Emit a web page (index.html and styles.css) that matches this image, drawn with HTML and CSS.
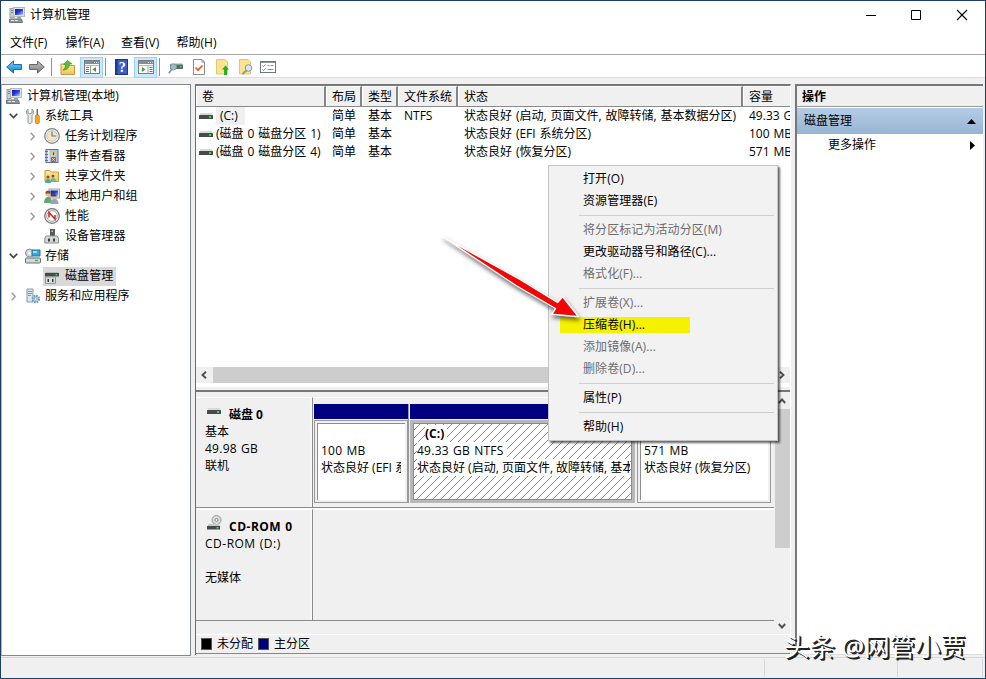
FILE: index.html
```html
<!DOCTYPE html>
<html lang="zh-CN">
<head>
<meta charset="utf-8">
<title>计算机管理</title>
<link rel="stylesheet" href="styles.css">
</head>
<body>
<svg width="0" height="0" class="defs">
  <defs>
    <linearGradient id="screen" x1="0" y1="0" x2="1" y2="1"><stop offset="0" stop-color="#0616a8"/><stop offset=".5" stop-color="#2b3fd8"/><stop offset="1" stop-color="#bcd0ff"/></linearGradient>
    <linearGradient id="blueArrow" x1="0" y1="0" x2="0" y2="1"><stop offset="0" stop-color="#7fd4fb"/><stop offset="1" stop-color="#0b7fd0"/></linearGradient>
    <linearGradient id="grayArrow" x1="0" y1="0" x2="0" y2="1"><stop offset="0" stop-color="#c4c4c4"/><stop offset="1" stop-color="#7d7d7d"/></linearGradient>
    <linearGradient id="folder" x1="0" y1="0" x2="0" y2="1"><stop offset="0" stop-color="#ffeaa0"/><stop offset="1" stop-color="#eec45c"/></linearGradient>
    <symbol id="pc" viewBox="0 0 16 16">
      <rect x="1" y="1.500" width="4" height="9" fill="#c9ced0" stroke="#9aa0a2"/><path d="M2 3.500h2M2 5.500h2" stroke="#7b8385"/>
      <rect x="4.500" y=".5" width="11" height="9" fill="#dfe3e0" stroke="#b4bab5"/><rect x="6" y="2" width="8" height="6" fill="url(#screen)"/>
      <path d="M8 10h4v1.500H8z" fill="#9a9f98"/><path d="M.5 12h12l1 3.500H.5z" fill="#8d9598" stroke="#70777a"/><path d="M2 13.500h3M6 13.500h3" stroke="#e4e8e8"/>
    </symbol>
    <symbol id="drive" viewBox="0 0 14 7">
      <path d="M1.500 0h11L14 3H0z" fill="#d9dbdb"/><rect y="2" width="14" height="4" rx=".6" fill="#454b4b"/><rect x="10" y="3" width="2" height="2" fill="#39e04c"/>
    </symbol>
    <symbol id="open" viewBox="0 0 5 9"><path d="M.7.700 4.200 4.500.7 8.300" fill="none" stroke="#a0a0a0" stroke-width="1.500"/></symbol>
    <symbol id="shut" viewBox="0 0 9 6"><path d="M.7.700 4.500 4.600 8.300.7" fill="none" stroke="#404040" stroke-width="1.600"/></symbol>
    <symbol id="win" viewBox="0 0 16 14">
      <rect x=".5" y=".5" width="15" height="13" fill="#fff" stroke="#777f86"/><path d="M1 1h14v3H1z" fill="#868e94"/><path d="M10 2.500h1M12 2.500h1M14 2.500h.5" stroke="#fff"/><path d="M1 5.500h14" stroke="#b4babe"/>
    </symbol>
  </defs>
</svg>

<div class="window">
  <header class="titlebar">
    <svg class="i16"><use href="#pc"/></svg>
    <span class="title">计算机管理</span>
    <svg class="controls" viewBox="0 0 104 12"><path d="M0 6.500h10" stroke="#000"/><path d="M45.500 1.500h9v9h-9z" fill="none" stroke="#000"/><path d="m91 1 10 10m0-10L91 11" stroke="#000" stroke-width="1.100"/></svg>
  </header>

  <nav class="menubar"><span>文件(F)</span><span>操作(A)</span><span>查看(V)</span><span>帮助(H)</span></nav>

  <div class="toolbar">
    <svg class="t-back" viewBox="0 0 16 14"><path d="M.7 7 7.500 1v3.500h8v5h-8V13z" fill="url(#blueArrow)" stroke="#1c6ca8"/></svg>
    <svg class="t-fwd" viewBox="0 0 16 14"><path d="M15.300 7 8.500 1v3.500h-8v5h8V13z" fill="url(#grayArrow)" stroke="#666"/></svg>
    <i class="divider d1"></i>
    <svg class="t-up" viewBox="0 0 15 15"><path d="M1 4h5l1 1.500h7.500v9H1z" fill="url(#folder)" stroke="#c49a3c"/><path d="M3 10C5 9 5.500 7 5.500 4.500H3.500L7.500.5l4.500 3.500H9.500c-.5 4-2.500 6-6.500 6z" fill="#5bbf34" stroke="#358c1c" stroke-width=".6"/></svg>
    <span class="pressed p1"><svg viewBox="0 0 16 14"><use href="#win"/><path d="M2 7.500h3m-3 2h3m-3 2h3" stroke="#3b7cc0"/><path d="M6.500 6v7" stroke="#9ba2a7"/><path d="M12 7v5L8.500 9.500z" fill="#3ba52b"/></svg></span>
    <i class="divider d2"></i>
    <svg class="t-help" viewBox="0 0 13 16"><rect x=".5" y=".5" width="12" height="15" fill="#3a5fc4" stroke="#20377c"/><path d="M1.500 1v14" stroke="#1f3a90" stroke-width="2"/><text x="7.300" y="13" text-anchor="middle" class="q">?</text></svg>
    <span class="pressed p2"><svg viewBox="0 0 16 14"><use href="#win"/><path d="M11.500 7.500h3m-3 2h3m-3 2h3" stroke="#3b7cc0"/><path d="M10 6v7" stroke="#9ba2a7"/><path d="M4 7v5l3.500-2.500z" fill="#3ba52b"/></svg></span>
    <i class="divider d3"></i>
    <svg class="t-find" viewBox="0 0 15 13"><path d="M3 2h11l1 2H2z" fill="#cfd4d4"/><rect x="2" y="3.500" width="13" height="4.500" fill="#5b6669"/><path d="M12 5h1.500v1.500H12z" fill="#4ee260"/><path d="M4 8 .8 12.300" stroke="#7c9db0" stroke-width="1.800"/><circle cx="5.500" cy="6" r="3" fill="#bfe0ee" fill-opacity=".7" stroke="#7b99a6"/></svg>
    <svg class="t-check" viewBox="0 0 12 16"><path d="M.5.500H9L11.500 3v12.500H.5z" fill="#fff" stroke="#8d8d8d"/><path d="M9 .5V3h2.500" fill="none" stroke="#8d8d8d"/><path d="m2.500 8.500 2.500 2.700 4.500-4.700" fill="none" stroke="#ef5a22" stroke-width="1.700"/></svg>
    <svg class="t-export" viewBox="0 0 13 16"><path d="M.5.500H9L11.500 3v12H.5z" fill="#fbe38f" stroke="#e3c774"/><path d="m9.500 6.500 3.500 4h-2V16H8v-5.500H6z" fill="#28b01e"/></svg>
    <svg class="t-search" viewBox="0 0 14 16"><path d="M.5.500H9L11.500 3v12H.5z" fill="#fbe38f" stroke="#e3c774"/><path d="m7.500 11.500-4 3.500" stroke="#8797a0" stroke-width="1.800"/><circle cx="9.500" cy="9" r="3.300" fill="#d5eaf5" stroke="#8797a0"/></svg>
    <svg class="t-list" viewBox="0 0 16 12"><rect x=".5" y=".5" width="15" height="11" fill="#fff" stroke="#6d767b"/><path d="M1 1.500h14" stroke="#8b9498"/><path d="m2.500 4.500 1 1 2-2M2.500 8.500l1 1 2-2" fill="none" stroke="#4596d8"/><path d="M7.500 4.500h2m1 0h3m-6 4h6" stroke="#88939a"/></svg>
  </div>

  <main class="workspace">
    <aside class="tree">
      <div class="node root"><svg class="i16"><use href="#pc"/></svg><span>计算机管理(本地)</span></div>
      <div class="node l1"><svg class="shut"><use href="#shut"/></svg>
        <svg class="i16" viewBox="0 0 16 16"><path d="M3 1v4l2 1 2-1V1c2 1 2 5 0 6.500V14c0 2-4 2-4 0V7.500C1 6 1 2 3 1z" fill="#e8eaea" stroke="#828a8c" stroke-width=".9"/><path d="M11.500 1h1.500v6h-1.500z" fill="#687078"/><rect x="10.300" y="7" width="4" height="8.500" rx="1.300" fill="#f6a91d" stroke="#b97611" stroke-width=".7"/></svg><span>系统工具</span></div>
      <div class="node l2"><svg class="open"><use href="#open"/></svg>
        <svg class="i16" viewBox="0 0 16 16"><circle cx="8" cy="8" r="7.300" fill="#f1f3f4" stroke="#7d8488" stroke-width="1.200"/><circle cx="8" cy="8" r="5.300" fill="#f9e5b9" stroke="#c6cacb"/><path d="M8 3.500V8h4" fill="none" stroke="#4f7da9" stroke-width="1.200"/></svg><span>任务计划程序</span></div>
      <div class="node l2"><svg class="open"><use href="#open"/></svg>
        <svg class="i16" viewBox="0 0 16 16"><rect x="2" y="1.500" width="12" height="13" fill="#b4c5e2" stroke="#5d7296"/><path d="M4.500 2v12" stroke="#e9eff8" stroke-width="2"/><path d="M1 3.500h3m-3 3h3m-3 3h3m-3 3h3" stroke="#5b6f90"/><path d="m9.500 3 3.500 5H6z" fill="#fbd32f"/><path d="M9.600 4.500v2.500" stroke="#222"/><rect x="7" y="9" width="5" height="5" rx="1" fill="#e0413d"/><path d="m8.300 10.300 2.400 2.400m0-2.400-2.400 2.400" stroke="#fff" stroke-width=".8"/></svg><span>事件查看器</span></div>
      <div class="node l2"><svg class="open"><use href="#open"/></svg>
        <svg class="i16" viewBox="0 0 16 16"><path d="M1 2.500h5l1 1.500h7.500v9.500H1z" fill="url(#folder)" stroke="#c99a3e"/><circle cx="4" cy="9" r="1.500" fill="#805333"/><path d="M1 15c0-5.500 6-5.500 6 0z" fill="#49ac8c"/><circle cx="9" cy="8" r="1.500" fill="#805333"/><path d="M6.200 14c0-5.500 5.800-5.500 5.800 0z" fill="#5abe9c"/></svg><span>共享文件夹</span></div>
      <div class="node l2"><svg class="open"><use href="#open"/></svg>
        <svg class="i16" viewBox="0 0 16 16"><rect x="5" y="1" width="10.500" height="9" fill="#dde1e6" stroke="#a0a5aa"/><rect x="6.500" y="2.500" width="7.500" height="6" fill="url(#screen)"/><circle cx="4" cy="6" r="2.500" fill="#e9b986"/><path d="M1.300 5.500c0-4 5.400-4 5.400 0" fill="#835224"/><path d="M0 15c0-8 8-8 8 0z" fill="#62a86a"/><circle cx="10" cy="9" r="2.300" fill="#edc292"/><path d="M7.600 8.500c0-3.500 4.900-3.500 4.900 0" fill="#594133"/><path d="M6.500 16c0-7 8-7 8 0z" fill="#8da7c7"/></svg><span>本地用户和组</span></div>
      <div class="node l2"><svg class="open"><use href="#open"/></svg>
        <svg class="i16" viewBox="0 0 16 16"><circle cx="8" cy="8" r="7.300" fill="#eee" stroke="#777" stroke-width="1.200"/><circle cx="8" cy="8" r="5.300" fill="#fff" stroke="#a3a3a3"/><path d="M5 9.500V4.500l6 6.500V7" fill="none" stroke="#d5221d" stroke-width="1.500"/></svg><span>性能</span></div>
      <div class="node l2 leaf">
        <svg class="i16" viewBox="0 0 16 16"><path d="M6 1h5v7H6z" fill="#565c5e"/><path d="M7.500 2.500h1.500V4H7.500z" fill="#a5e7aa"/><path d="M2 8h11l1.500 2v5H.8v-5z" fill="#d5d8d9" stroke="#8c9193"/><path d="M4 10.500h2v3H4zm5 0h2v3H9z" fill="#3d4345"/></svg><span>设备管理器</span></div>
      <div class="node l1"><svg class="shut"><use href="#shut"/></svg>
        <svg class="i16" viewBox="0 0 16 16"><circle cx="4.500" cy="5" r="4" fill="#d6dadd" stroke="#888f94"/><circle cx="4.500" cy="5" r="1.200" fill="#fff"/><path d="M7 2h8v6H7z" fill="#38a8dc" stroke="#297599"/><path d="M8 3h4v2H8z" fill="#9de0f8"/><path d="M1.500 9h12l2 2H.5z" fill="#e7e9ea"/><rect x=".5" y="10" width="15" height="5" rx="1" fill="#d3d7d9" stroke="#697075"/><path d="M10 12.500h3" stroke="#34cc47" stroke-width="1.500"/></svg><span>存储</span></div>
      <div class="node l2 leaf">
        <span class="selected"><svg class="i16" viewBox="0 0 16 16"><path d="M2 4h12l1 2H1z" fill="#b5b9ba"/><path d="M1 5h14v3.500H1z" fill="#444b4d"/><path d="M11.500 6H13v1.500h-1.500z" fill="#42dd54"/><path d="M1.500 9h10v6.500h-10z" fill="#dadddd" stroke="#919697"/><path d="M3.500 11h1.500v3H3.500zm4.500 0h1.500v3H8z" fill="#33393b"/></svg><span>磁盘管理</span></span></div>
      <div class="node l1"><svg class="open"><use href="#open"/></svg>
        <svg class="i16" viewBox="0 0 16 16"><path d="M2 1h6v13H2z" fill="#dce7ed" stroke="#8799a4"/><path d="M3 3.500h4M3 5.500h4M3 7.500h3" stroke="#769bad"/><circle cx="10.800" cy="11" r="3.200" fill="#c9e0f0" stroke="#6d9cbc" stroke-width="2.200" stroke-dasharray="1.600 .9"/><circle cx="10.800" cy="11" r="1.300" fill="#fff" stroke="#6d9cbc" stroke-width=".7"/></svg><span>服务和应用程序</span></div>
    </aside>

    <section class="center">
      <div class="volumes">
        <div class="grid head"><span>卷</span><span>布局</span><span>类型</span><span>文件系统</span><span>状态</span><span>容量</span></div>
        <div class="grid"><span class="vol"><svg><use href="#drive"/></svg><b class="focus">(C:)</b></span><span>简单</span><span>基本</span><span>NTFS</span><span>状态良好 (启动, 页面文件, 故障转储, 基本数据分区)</span><span>49.33 GB</span></div>
        <div class="grid"><span class="vol"><svg><use href="#drive"/></svg><b>(磁盘 0 磁盘分区 1)</b></span><span>简单</span><span>基本</span><span></span><span>状态良好 (EFI 系统分区)</span><span>100 MB</span></div>
        <div class="grid"><span class="vol"><svg><use href="#drive"/></svg><b>(磁盘 0 磁盘分区 4)</b></span><span>简单</span><span>基本</span><span></span><span>状态良好 (恢复分区)</span><span>571 MB</span></div>
        <div class="hscroll"><svg viewBox="0 0 6 8"><path d="M5 .8 1.500 4 5 7.200" /></svg><i></i><svg viewBox="0 0 6 8"><path d="M1 .8 4.500 4 1 7.200"/></svg></div>
      </div>
      <div class="splitter"></div>
      <div class="disks">
        <div class="disklist">
          <div class="disk">
            <div class="info"><div class="name"><svg class="dk" viewBox="0 0 14 7"><use href="#drive"/></svg><span>磁盘 0</span></div><div>基本</div><div class="wide">49.98 GB</div><div>联机</div></div>
            <div class="parts">
              <div class="part a"><div class="bar"></div><div class="box"><p>&nbsp;</p><p class="wide">100 MB</p><p>状态良好 (EFI 系统分区)</p></div></div>
              <div class="part b"><div class="bar"></div><div class="box"><p class="label"><em>(C:)</em></p><p class="wide"><em>49.33 GB NTFS</em></p><p><em>状态良好 (启动, 页面文件, 故障转储, 基本数据分区)</em></p></div></div>
              <div class="part c"><div class="bar"></div><div class="box"><p>&nbsp;</p><p class="wide">571 MB</p><p>状态良好 (恢复分区)</p></div></div>
            </div>
          </div>
          <div class="disk cd">
            <div class="info"><div class="name"><svg class="cdk" viewBox="0 0 15 15"><circle cx="9.500" cy="5" r="4.500" fill="#ddd" stroke="#999"/><circle cx="9.500" cy="5" r="1.500" fill="#fff" stroke="#888"/><path d="M1.500 9h10L14 12H0z" fill="#c5c8c8"/><path d="M0 11h13v3.500H0z" fill="#454b4b"/><path d="M9.500 12h2v1.500h-2z" fill="#39e04c"/></svg><span class="wider">CD-ROM 0</span></div><div class="wider">CD-ROM (D:)</div><div>&nbsp;</div><div>无媒体</div></div>
            <div class="parts"></div>
          </div>
        </div>
        <div class="vscroll"><svg viewBox="0 0 8 6"><path d="M.8 5 4 1.500 7.200 5"/></svg><i></i><svg viewBox="0 0 8 6"><path d="M.8 1 4 4.500 7.200 1"/></svg></div>
      </div>
      <div class="legend"><i class="k"></i><span>未分配</span><i class="n"></i><span>主分区</span></div>
    </section>

    <aside class="actions">
      <div class="ahead">操作</div>
      <div class="agroup"><span>磁盘管理</span><svg viewBox="0 0 9 5"><path d="M0 5 4.500 0 9 5z"/></svg></div>
      <div class="aitem"><span>更多操作</span><svg viewBox="0 0 5 9"><path d="M0 0 5 4.500 0 9z"/></svg></div>
    </aside>
  </main>
  <footer class="status"><span></span><span></span><span></span></footer>
</div>

<div class="popup">
  <div>打开(O)</div><div>资源管理器(E)</div><hr>
  <div class="off">将分区标记为活动分区(M)</div><div>更改驱动器号和路径(C)...</div><div class="off">格式化(F)...</div><hr>
  <div class="off">扩展卷(X)...</div><div class="marked">压缩卷(H)...</div><div class="off">添加镜像(A)...</div><div class="off">删除卷(D)...</div><hr>
  <div>属性(P)</div><hr>
  <div>帮助(H)</div>
</div>
<svg class="pointer" viewBox="0 0 150 100"><path d="M4.700 4.700 82 47.500 119.500 70.500 124.700 64.700 140.500 84.700 113.700 82.300 117.500 76.500 78 53.500z" fill="#f20505" stroke="#fff" stroke-width="1.400" stroke-linejoin="round"/></svg>
<div class="credit">头条 @网管小贾</div>
</body>
</html>
```
FILE: styles.css
```css
* { box-sizing: border-box; }
body { margin: 0; width: 986px; height: 679px; overflow: hidden; font: 12px/18px "Open Sans", "Noto Sans CJK SC", sans-serif; color: #000; }
svg { display: block; flex: none; }
.defs { position: absolute; }
.i16 { width: 16px; height: 16px; }
.window { width: 986px; height: 679px; border: 1px solid #1d3f66; background: #f0f0f0; display: flex; flex-direction: column; }

.titlebar { height: 29px; background: #fff; display: flex; align-items: center; padding: 0 15px 1px 8px; }
.title { margin-left: 5px; }
.controls { width: 104px; height: 12px; margin-left: auto; }
.menubar { height: 24px; background: #fff; display: flex; align-items: center; gap: 16px; padding: 2px 0 0 9px; }
.menubar span { width: 39.500px; white-space: nowrap; }
.toolbar { height: 24px; background: #fff; border-top: 1px solid #a8a8a8; border-bottom: 1px solid #dcdcdc; display: flex; align-items: center; padding: 2px 0 0 5px; }
.t-back { width: 16px; height: 14px; }
.t-fwd { width: 16px; height: 14px; margin-left: 7px; }
.divider { width: 1px; height: 18px; background: #8f8f8f; }
.d1 { margin-left: 6px; }
.t-up { width: 15px; height: 15px; margin-left: 8px; }
.pressed { width: 23px; height: 21px; background: #cce8ff; border: 1px solid #99d1ff; display: flex; align-items: center; justify-content: center; }
.pressed svg { width: 16px; height: 14px; }
.p1 { margin-left: 5px; }
.d2 { margin-left: 2px; }
.t-help { width: 13px; height: 16px; margin-left: 9px; }
.q { font: bold 14px "Liberation Serif", serif; fill: #fff; }
.p2 { margin-left: 6px; }
.d3 { margin-left: 2px; }
.t-find { width: 15px; height: 13px; margin-left: 8px; }
.t-check { width: 12px; height: 16px; margin-left: 10px; }
.t-export { width: 13px; height: 16px; margin-left: 11px; }
.t-search { width: 14px; height: 16px; margin-left: 10px; }
.t-list { width: 16px; height: 12px; margin-left: 7px; }

.workspace { flex: 1; min-height: 0; display: flex; padding: 6px 2px 0 0; }
.tree { width: 190px; height: 572px; background: #fff; border: 1px solid #828790; border-left-color: #b5b8bd; padding-top: 1px; margin-right: 4px; }
.node { height: 20px; display: flex; align-items: center; white-space: nowrap; letter-spacing: .1px; }
.node > span { margin-left: 4px; }
.root { padding-left: 4px; }
.root > span { margin-left: 5px; }
.shut { width: 9px; height: 6px; margin-right: 7px; }
.open { width: 5px; height: 9px; margin-right: 9px; }
.l1 { padding-left: 7px; }
.l1 .open { margin: 0 9px 0 2px; }
.l2 { padding-left: 28px; }
.l2 > .i16 { margin-right: 1px; }
.leaf { padding-left: 42px; }
.leaf .selected { margin-left: -1px; padding: 0 3px 0 1px; height: 19px; background: #d9d9d9; display: flex; align-items: center; gap: 5px; }

.center { width: 596px; height: 571px; border-left: 1px solid #6d6d6d; border-top: 2px solid #777; border-right: 1px solid #fff; margin-right: 4px; display: flex; flex-direction: column; }
.volumes { height: 300px; background: #fff; display: flex; flex-direction: column; overflow: hidden; flex: none; }
.grid { display: grid; grid-template-columns: 130px 36px 36px 60px 285px 47px; height: 18px; align-items: center; flex: none; word-spacing: .8px; }
.grid > span { white-space: nowrap; overflow: hidden; padding-left: 6px; height: 18px; }
.head { height: 21px; background: #f0f0f0; border-bottom: 1px solid #8a8a8a; }
.head > span { height: 20px; line-height: 20px; border-right: 2px solid #858585; border-top: 1px solid #fff; box-shadow: inset 1px 0 #fff; }
.head > span:last-child { border-right: 0; }
.grid .vol { display: flex; align-items: center; padding-left: 3px; }
.vol svg { width: 14px; height: 7px; }
.vol b { font-weight: normal; margin-left: 3px; }
.vol .focus { background: #f0f0f0; padding: 0 7px 0 4px; }
.hscroll { margin-top: auto; margin-bottom: 3px; height: 16px; background: #f0f0f0; display: flex; align-items: center; padding: 0 5px; }
.hscroll svg { width: 6px; height: 8px; }
.hscroll path, .vscroll path { fill: none; stroke: #505050; stroke-width: 1.900; }
.hscroll i { flex: 1; margin: 0 5px 0 6px; height: 16px; background: #cdcdcd; }
.splitter { height: 6px; flex: none; border-top: 1px solid #fff; border-bottom: 2px solid #777; background: #f0f0f0; }
.disks { height: 242px; display: flex; flex: none; }
.disklist { flex: 1; padding-top: 5px; }
.disk { height: 111px; display: flex; border-bottom: 1px solid #8c8c8c; }
.disk + .disk { height: 113px; border-top: 1px solid #fff; }
.info { width: 117px; border-right: 1px solid #8c8c8c; border-top: 1px solid #fff; box-shadow: inset -2px 0 #f8f8f8; padding: 7px 0 0 9px; line-height: 17px; }
.wide { letter-spacing: .25px; word-spacing: .8px; }
.wider { letter-spacing: .5px; word-spacing: .5px; }
.name { display: flex; font-weight: bold; align-items: center; height: 18px; }
.dk { width: 14px; height: 7px; margin: -6px 8px 0 2px; }
.cdk { width: 15px; height: 15px; margin: -7px 7px 0 2px; }
.parts { flex: 1; display: flex; align-items: flex-start; padding-top: 6px; border-top: 1px solid #fff; margin-left: 1px; }
.part .bar { height: 15px; background: #000080; margin-bottom: 1px; }
.part .box { height: 83px; white-space: nowrap; overflow: hidden; }
.part p { margin: 0; line-height: 17px; height: 17px; overflow: hidden; }
.a { width: 95px; border-right: 1px solid #999; margin-right: 1px; }
.b { width: 225px; margin-right: 2px; }
.c { width: 134px; }
.a .box, .c .box { background: #fff; border: 3px solid #f0f0f0; outline: 1px solid #999; outline-offset: -1px; padding: 2px 4px 0 4px; box-shadow: inset 1px 1px #8d8d8d; }
.b .box { border: 3px solid #b8b8b8; padding: 2px 2px 0 2px; background: repeating-linear-gradient(135deg, #fff 0 4.950px, #8c8c8c 4.950px 5.657px) padding-box; box-shadow: inset 0 0 0 1px #8b8b8b; }
.b p { padding-left: 2px; }
.b em { font-style: normal; background: #fff; display: inline-block; height: 17px; padding-right: 3px; }
.b .label { font-weight: bold; padding-left: 10px; }
.vscroll { width: 16px; background: #f0f0f0; display: flex; flex-direction: column; align-items: center; padding: 6px 0 5px; }
.vscroll svg { width: 8px; height: 6px; }
.vscroll i { width: 15px; height: 139px; margin: 5px 0 auto; background: #cdcdcd; }
.legend { height: 20px; border-top: 1px solid #fff; border-bottom: 1px solid #888; display: flex; align-items: center; padding-left: 5px; }
.legend i { width: 11px; height: 12px; background: #000; border: 1px solid #555; }
.legend .n { background: #000080; margin-left: 5px; }
.legend span { margin-left: 5px; }

.actions { flex: 1; height: 571px; background: #fff; border-left: 2px solid #777; border-top: 2px solid #777; border-bottom: 1px solid #ddd; }
.ahead { height: 21px; line-height: 22px; background: #f0f0f0; border-bottom: 1px solid #999; font-weight: bold; padding-left: 5px; }
.agroup { height: 26px; margin-top: 1px; background: linear-gradient(#b4cce6, #98b4d4); display: flex; align-items: center; justify-content: space-between; padding: 0 7px; }
.agroup svg { width: 9px; height: 5px; }
.aitem { height: 22px; display: flex; align-items: center; justify-content: space-between; padding: 0 8px 0 31px; }
.aitem svg { width: 5px; height: 9px; }

.status { height: 21px; border-top: 1px solid #d7d7d7; display: flex; flex: none; padding-top: 1px; }
.status span { height: 18px; border-right: 1px solid #d7d7d7; }
.status span:nth-child(1) { width: 764px; }
.status span:nth-child(2) { width: 133px; }
.status span:nth-child(3) { width: 85px; }

.popup { position: absolute; left: 548px; top: 165px; width: 230px; height: 276px; background: #f2f2f2; border: 1px solid #c4c4c4; padding: 2px 0; box-shadow: 2px 2px 2px rgba(0,0,0,.6); }
.popup div { height: 22px; line-height: 22px; padding-left: 34px; white-space: nowrap; letter-spacing: .08px; }
.popup .off { color: #6d6d6d; }
.popup hr { height: 1px; border: 0; margin: 3px 3px 3px 30px; background: #cfcfcf; }
.popup .marked { background: linear-gradient(#f5f200, #f5f200) 11px 3px / 130px 16px no-repeat; }
.pointer { position: absolute; left: 438px; top: 232px; width: 150px; height: 100px; filter: drop-shadow(1px 3px 2px rgba(0,0,0,.55)); }
.credit { position: absolute; left: 784px; top: 628px; font-size: 25.400px; line-height: 36px; color: #fff; white-space: nowrap; text-shadow: 1px 1px #222, 2px 2px #222; }
```
